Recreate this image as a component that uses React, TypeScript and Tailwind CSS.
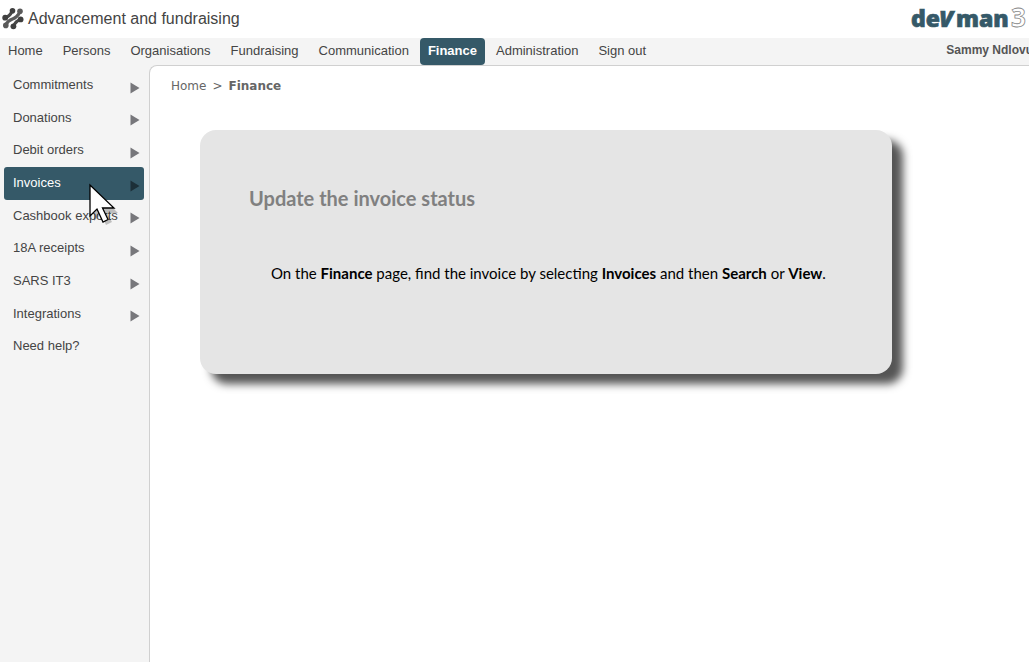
const menu = [
  'Home',
  'Persons',
  'Organisations',
  'Fundraising',
  'Communication',
  'Finance',
  'Administration',
  'Sign out',
];

const sections = [
  'Commitments',
  'Donations',
  'Debit orders',
  'Invoices',
  'Cashbook exports',
  '18A receipts',
  'SARS IT3',
  'Integrations',
  'Need help?',
];

function BrandMark() {
  return (
    <svg viewBox="0 0 24 24" className="size-6" aria-hidden="true">
      <g stroke="#484848" strokeWidth="3.2" strokeLinecap="round" fill="none">
        <path d="M5.5 10.5Q9.5 9.5 12 4.5" />
        <path d="M5.5 18Q8 13.5 12.5 12T20 5" stroke="#5a5a5a" />
        <path d="M13.5 19.5Q15.5 14 20.5 12.5" />
      </g>
      <g fill="#3f3f3f">
        <circle cx="5.2" cy="10.7" r="2.9" />
        <circle cx="12.5" cy="3.8" r="2.8" />
        <circle cx="20" cy="4.2" r="2.8" fill="#5a5a5a" />
        <circle cx="5.8" cy="18.4" r="2.8" fill="#5a5a5a" />
        <circle cx="13.4" cy="19.3" r="2.9" />
        <circle cx="20.6" cy="12.4" r="2.9" />
      </g>
    </svg>
  );
}

function Wordmark() {
  return (
    <svg viewBox="0 0 118 36" className="h-9 w-[118px] shrink-0 overflow-visible" role="img" aria-label="devman3">
      <g fontFamily="'Open Sans', sans-serif" fontWeight="800" fontSize="23" fill="#355968" stroke="#355968" strokeWidth="0.7">
        <text x="0" y="26">de</text>
        <text x="28" y="26" fontStyle="italic">V</text>
        <text x="45" y="26">man</text>
        <text x="100" y="26" fontSize="26" fontWeight="700" fill="#fff" stroke="#888" strokeWidth="0.8">3</text>
      </g>
    </svg>
  );
}

function Cursor() {
  return (
    <svg viewBox="0 0 34 44" className="pointer-events-none absolute top-4 left-[84px] z-10 h-11 w-[34px]" aria-hidden="true">
      <path d="M2 2v32l7-7 5 11 6-3-5-9h11z" transform="translate(4 4)" fill="#000" opacity=".22" />
      <path d="M2 2v31l7-7 6 13 5-2.5-5.5-11.5h11.5z" fill="#fff" stroke="#000" strokeWidth="1.3" />
    </svg>
  );
}

export default function App() {
  return (
    <div className="flex min-h-screen flex-col overflow-x-hidden bg-white font-['Liberation_Sans',sans-serif] text-[13px] text-[#444]">
      <header className="flex h-[38px] items-center justify-between">
        <div className="flex items-center gap-1">
          <BrandMark />
          <h1 className="text-base">Advancement and fundraising</h1>
        </div>
        <Wordmark />
      </header>
      <nav className="flex h-7 items-start justify-between bg-[#f4f4f4]">
        <ul className="-ml-px flex gap-0.5">
          {menu.map((item) => (
            <li key={item}>
              <a
                href="#"
                className={
                  item === 'Finance'
                    ? 'block h-[27px] rounded bg-[#355968] px-2 leading-[25px] font-bold text-white'
                    : 'block h-[27px] px-[9px] leading-[25px]'
                }
              >
                {item}
              </a>
            </li>
          ))}
        </ul>
        <span className="-mr-1 text-xs leading-6 font-bold whitespace-nowrap text-[#555]">Sammy Ndlovu</span>
      </nav>
      <div className="flex flex-1 bg-[#f4f4f4]">
        <aside className="w-[149px] shrink-0 px-1 pt-[3px]">
          <ul className="grid h-[294px] auto-rows-fr">
            {sections.map((item) => (
              <li key={item} className="relative">
                <a
                  href="#"
                  className={
                    item === 'Invoices'
                      ? 'flex h-full w-[140px] items-center justify-between rounded-[3px] bg-[#355968] pr-1 pl-[9px] text-white'
                      : 'flex h-full w-[140px] items-center justify-between pr-1 pl-[9px]'
                  }
                >
                  <span className="pb-px">{item}</span>
                  {item !== 'Need help?' && (
                    <svg
                      viewBox="0 0 10 12"
                      className={item === 'Invoices' ? 'mt-[5px] h-3 w-2.5 text-[#1c2f38]' : 'mt-[5px] h-3 w-2.5 text-[#77777b]'}
                      aria-hidden="true"
                    >
                      <path d="M0.5 0.5 9.5 6 0.5 11.5z" fill="currentColor" />
                    </svg>
                  )}
                </a>
                {item === 'Invoices' && <Cursor />}
              </li>
            ))}
          </ul>
        </aside>
        <main className="-mt-px min-w-0 flex-1 rounded-tl-lg border-t border-l border-[#d0d0d0] bg-white">
          <div className="flex gap-1.5 pt-3 pl-[21px] font-['DejaVu_Sans',sans-serif] text-xs leading-4 text-[#666]">
            <a href="#">Home</a>
            <span>&gt;</span>
            <strong>Finance</strong>
          </div>
          <section className="mt-9 mr-[137px] ml-[50px] h-[244px] rounded-2xl bg-[#e5e5e5] px-[49px] pt-14 font-[Lato,sans-serif] shadow-[11px_10px_8px_#555]">
            <h2 className="text-xl leading-6 font-bold text-[#808080]">Update the invoice status</h2>
            <p className="mt-[53px] pl-[22px] text-[15px] leading-5 text-black">
              On the <strong>Finance</strong> page, find the invoice by selecting <strong>Invoices</strong> and then{' '}
              <strong>Search</strong> or <strong>View</strong>.
            </p>
          </section>
        </main>
      </div>
    </div>
  );
}
